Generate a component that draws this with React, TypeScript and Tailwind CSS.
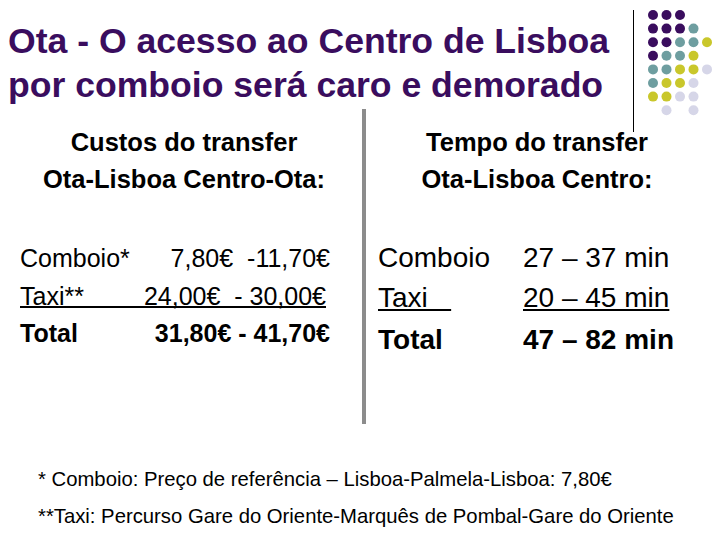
const PURPLE = "#3a0d5e";
const TEAL = "#6e9ea0";
const YELLOW = "#c9c72b";
const LAVENDER = "#d6d6e8";

// dot pattern, one string per row: P purple, T teal, Y yellow, L lavender, . empty
const DOTS = ["PPP..", "PPPT.", "PPTTY", "PTTY.", "TTYYL", "TYYL.", "YYLL.", ".L.L."];

function dotColor(c: string) {
  if (c === "P") return PURPLE;
  if (c === "T") return TEAL;
  if (c === "Y") return YELLOW;
  if (c === "L") return LAVENDER;
  return null;
}

function DotGrid() {
  return (
    <svg width="68" height="112" viewBox="0 0 68 112" className="ml-[12px] mt-[8px] flex-none">
      {DOTS.map((row, j) =>
        row.split("").map((c, i) => {
          const fill = dotColor(c);
          if (!fill) return null;
          return <circle key={`${i}-${j}`} cx={7 + i * 13.5} cy={7 + j * 13.6} r={5} fill={fill} />;
        })
      )}
    </svg>
  );
}

export default function App() {
  return (
    <div
      className="w-[728px] h-[546px] bg-white text-black overflow-hidden"
      style={{ fontFamily: '"Liberation Sans", Arial, sans-serif' }}
    >
      {/* header */}
      <div className="flex h-[109px] items-start">
        <h1 className="w-[633px] flex-none pl-[8px] pt-[19px] text-[35.6px] leading-[44px] font-bold text-[#3a0d5e]">
          Ota - O acesso ao Centro de Lisboa
          <br />
          por comboio será caro e demorado
        </h1>
        <div className="w-px h-[122px] mt-[10px] bg-black flex-none" />
        <DotGrid />
      </div>

      {/* body */}
      <div className="flex h-[315px]">
        <div className="w-[362px] flex-none">
          <div className="pl-[6px] pt-[15px] text-center text-[25.5px] leading-[37px] font-bold">
            <div>Custos do transfer</div>
            <div>Ota-Lisboa Centro-Ota:</div>
          </div>
          <div className="ml-[20px] mt-[50px] text-[25px] leading-[20px]">
            <div className="flex w-[310px] justify-between border-b-2 border-transparent">
              <span>Comboio*</span>
              <span className="whitespace-pre">7,80€  -11,70€</span>
            </div>
            <div className="flex w-[306px] justify-between border-b-2 border-black mt-[16px]">
              <span>Taxi**</span>
              <span className="whitespace-pre">24,00€  - 30,00€</span>
            </div>
            <div className="flex w-[310px] justify-between border-b-2 border-transparent mt-[15px] font-bold">
              <span>Total</span>
              <span>31,80€ - 41,70€</span>
            </div>
          </div>
        </div>

        <div className="w-[4px] h-[315px] bg-[#8c8c8c] flex-none" />

        <div className="flex-1">
          <div className="pr-[20px] pt-[15px] text-center text-[25.5px] leading-[37px] font-bold">
            <div>Tempo do transfer</div>
            <div>Ota-Lisboa Centro:</div>
          </div>
          <div className="pl-[12px] mt-[40px] text-[28px] leading-[40px]">
            <div className="grid grid-cols-[145px_1fr]">
              <span>Comboio</span>
              <span>27 – 37 min</span>
            </div>
            <div className="grid grid-cols-[145px_1fr]">
              <span className="underline whitespace-pre">Taxi   </span>
              <span className="underline">20 – 45 min</span>
            </div>
            <div className="grid grid-cols-[145px_1fr] mt-[2px] font-bold">
              <span>Total</span>
              <span>47 – 82 min</span>
            </div>
          </div>
        </div>
      </div>

      {/* footnotes */}
      <div className="pl-[38px] pt-[37px] text-[20.3px] leading-[37px]">
        <div>* Comboio: Preço de referência – Lisboa-Palmela-Lisboa: 7,80€</div>
        <div>**Taxi: Percurso Gare do Oriente-Marquês de Pombal-Gare do Oriente</div>
      </div>
    </div>
  );
}
